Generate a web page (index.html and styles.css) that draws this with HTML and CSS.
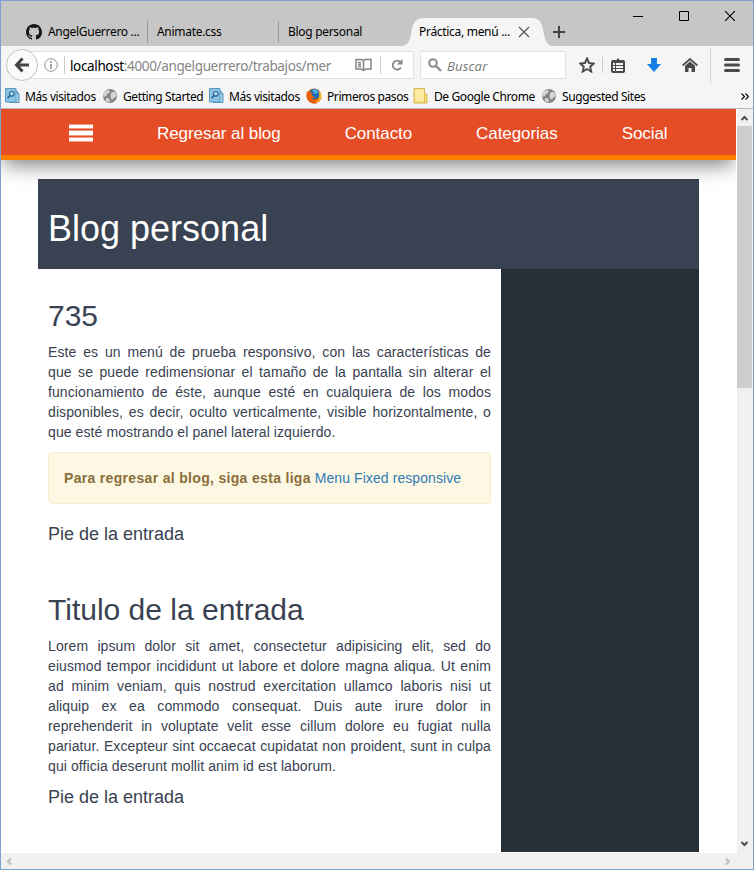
FILE: index.html
```html
<!DOCTYPE html>
<html lang="es">
<head>
<meta charset="utf-8">
<title>Práctica, menú responsivo</title>
<link rel="stylesheet" href="styles.css">
</head>
<body>
<svg class="defs" width="0" height="0" aria-hidden="true">
  <symbol id="most" viewBox="-1 0 16 16">
    <path d="M10 3.500h2.500v2H14v9H4" fill="#a9d3ec" stroke="#4f8fba"/>
    <path d="M.5.500h10.500v13.500H.5z" fill="#8cc3e4" stroke="#5b9cc6"/>
    <circle cx="6.800" cy="5.800" r="2.300" fill="#b9e0f5" stroke="#2b6690" stroke-width="1.200"/>
    <path d="M5.200 7.500 2.500 10.300" stroke="#2b6690" stroke-width="1.600"/>
  </symbol>
  <symbol id="globe" viewBox="0 0 16 16">
    <circle cx="8" cy="8" r="7" fill="#858585"/>
    <path d="M3 3.500 6 2l2 1-1 2-2 1-1 2-2.500 1C1 6.500 1.700 4.700 3 3.500zM9 5l3-1.500 2 2 .5 3-2 1-1.500 2-2-1-.5-2.500zM4 10l3 .5 1 2-1.500 2-2.500-1.500z" fill="#d6d6d6"/>
  </symbol>
</svg>
<div class="window">
  <header class="titlebar">
    <div class="tabs">
      <div class="tab first">
        <svg width="16" height="16" viewBox="0 0 16 16"><path fill="#161616" d="M8 0C3.580 0 0 3.580 0 8c0 3.540 2.290 6.530 5.470 7.590.4.070.55-.17.55-.38 0-.19-.01-.82-.01-1.490-2.010.37-2.530-.49-2.690-.94-.09-.23-.48-.94-.82-1.130-.28-.15-.68-.52-.01-.53.63-.01 1.080.58 1.230.82.72 1.210 1.870.87 2.330.66.070-.52.28-.87.51-1.070-1.780-.2-3.640-.89-3.640-3.950 0-.87.31-1.590.82-2.150-.08-.2-.36-1.020.08-2.120 0 0 .67-.21 2.200.82.64-.18 1.320-.27 2-.27s1.360.09 2 .27c1.530-1.040 2.200-.82 2.200-.82.44 1.100.16 1.920.08 2.120.51.56.82 1.270.82 2.150 0 3.070-1.870 3.750-3.650 3.950.29.25.54.73.54 1.480 0 1.070-.01 1.930-.01 2.200 0 .21.15.46.55.38A8.010 8.010 0 0 0 16 8c0-4.420-3.580-8-8-8z"/></svg>
        <span>AngelGuerrero ...</span>
      </div>
      <div class="tab second"><span>Animate.css</span></div>
      <div class="tab third"><span>Blog personal</span></div>
      <div class="tab active">
        <svg class="tab-shape" width="150" height="28" viewBox="0 0 150 28"><path fill="#f5f5f5" d="M0 28C8 27 8 20 10 11 12 3 15 0 22 0H129C137 0 140 4 141 12 143 22 145 27 150 28z"/></svg>
        <span>Práctica, menú ...</span>
        <svg class="close" width="12" height="12" viewBox="0 0 12 12"><path d="M1 1l10 10M11 1L1 11" stroke="#555" stroke-width="1.200"/></svg>
      </div>
      <svg class="plus" width="12" height="12" viewBox="0 0 12 12"><path d="M6 0v12M0 6h12" stroke="#444" stroke-width="2"/></svg>
    </div>
    <div class="controls">
      <svg width="10" height="10"><path d="M0 5.500h10" stroke="#000"/></svg>
      <svg width="10" height="10"><path d="M.5.500h9v9h-9z" fill="none" stroke="#000"/></svg>
      <svg width="10" height="10"><path d="M0 0l10 10M10 0L0 10" stroke="#000" stroke-width="1.100"/></svg>
    </div>
  </header>

  <div class="toolbar">
    <div class="back"><svg width="16" height="16" viewBox="0 0 16 16"><path d="M8.500 1.500 2.500 8l6 6.500M3 8h12" fill="none" stroke="#444" stroke-width="3"/></svg></div>
    <div class="urlbar">
      <svg width="14" height="14" viewBox="0 0 14 14"><circle cx="7" cy="7" r="6.300" fill="none" stroke="#929292"/><path d="M7 3v2M7 6v5" stroke="#929292" stroke-width="1.600"/></svg>
      <i class="bar"></i>
      <span class="url"><b>localhost</b>:4000/angelguerrero/trabajos/mer</span>
      <svg class="reader" width="17" height="14" viewBox="0 0 17 14"><path d="M1 1.500h5.500l2 1 2-1H16v9.500h-5l-2.500 1.500L6 11H1zM8.500 3v9M3 4.500h3M3 6.500h3M3 8.500h3" fill="none" stroke="#858585" stroke-width="1.500"/></svg>
      <i class="bar short"></i>
      <svg width="12" height="12" viewBox="0 0 12 12"><path d="M9.500 3A4.500 4.500 0 1 0 10 8.500" fill="none" stroke="#858585" stroke-width="1.800"/><path d="M11.500 0v5.500H6z" fill="#858585"/></svg>
    </div>
    <div class="search">
      <svg width="14" height="14" viewBox="0 0 14 14"><circle cx="5" cy="5" r="3.800" fill="none" stroke="#8d8d8d" stroke-width="2"/><path d="M8 8l5 5" stroke="#8d8d8d" stroke-width="2.400"/></svg>
      <em>Buscar</em>
    </div>
    <div class="tools">
      <svg width="16" height="16" viewBox="0 0 16 16"><path d="M8 1.500l2 4.500 4.800.5-3.600 3.200 1 4.800L8 12l-4.200 2.500 1-4.800L1.200 6.500 6 6z" fill="none" stroke="#4a4a4a" stroke-width="1.900"/></svg>
      <i class="bar tool-bar"></i>
      <svg class="clip" width="14" height="15" viewBox="0 0 14 15"><rect x="1" y="3" width="12" height="11" rx="1" fill="#f5f5f5" stroke="#4a4a4a" stroke-width="2"/><path d="M1 2.500h4l2-2.500 2 2.500h4V5H1z" fill="#4a4a4a"/><path d="M4.500 5v8M2 7.500h10M2 10.500h10" stroke="#4a4a4a"/></svg>
      <svg class="down" width="14" height="14" viewBox="0 0 14 14"><path d="M4 0h6v6h4l-7 8-7-8h4z" fill="#177ee5"/></svg>
      <svg class="home" width="16" height="15" viewBox="0 0 16 15"><path d="M.6 7.500 8 1l7.400 6.500" fill="none" stroke="#4a4a4a" stroke-width="1.700"/><path d="M3 7.800l5-4.200 5 4.200V14H9.500v-4h-3v4H3z" fill="#4a4a4a"/></svg>
      <i class="tall"></i>
      <svg class="burger" width="16" height="14" viewBox="0 0 16 14"><path d="M1.500 1.500h13M1.500 7h13M1.500 12.500h13" stroke="#4a4a4a" stroke-width="3" stroke-linecap="round"/></svg>
    </div>
  </div>

  <div class="bookmarks">
    <div class="bm b1"><svg><use href="#most"/></svg><span>Más visitados</span></div>
    <div class="bm b2"><svg><use href="#globe"/></svg><span>Getting Started</span></div>
    <div class="bm b3"><svg><use href="#most"/></svg><span>Más visitados</span></div>
    <div class="bm b4">
      <svg viewBox="0 0 16 16"><circle cx="8" cy="8" r="7.500" fill="#e66000"/><circle cx="8.500" cy="6" r="5.300" fill="#1c6cb5"/><path d="M6 2c3-2 6 0 6.500 2.500L9 6z" fill="#4fb3e8"/><path d="M.7 3C0 8 1 14 7.500 15.500c4 .5 7.500-2.500 8-7-.5 2-2 3.500-3.500 4-3 1-6-.5-6.200-2.500 1 .5 2.500 0 3.200-1-2 0-2-1.500-3.500-2L7 5C5 5 4 4 3.500 3.500 2 4 1.500 5 .7 3z" fill="#e8600c"/><path d="M12.500 2.500c3.500 3.500 3.500 7 1.500 9.500-1.500 2-3.500 2.500-5 2 4-1 5.500-5 3.500-11.500z" fill="#fcc32e"/></svg>
      <span>Primeros pasos</span></div>
    <div class="bm b5"><svg viewBox="0 0 16 16"><path d="M1 .5h10.500v5.500l2.500.5v8.500H1z" fill="#f7df80" stroke="#d6b54a"/><path d="M2 1h9v12H2z" fill="#fbeaa0"/><path d="M11.500 7v8" stroke="#dcb84d"/></svg><span>De Google Chrome</span></div>
    <div class="bm b6"><svg><use href="#globe"/></svg><span>Suggested Sites</span></div>
    <svg width="8" height="7" viewBox="0 0 8 7"><path d="M.5.500l3 3-3 3M4.500.500l3 3-3 3" fill="none" stroke="#000" stroke-width="1.100"/></svg>
  </div>

  <div class="viewport">
    <main class="page">
      <nav class="menu">
        <svg width="24" height="18" viewBox="0 0 24 18"><path d="M0 0h24v5H0zM0 6h24v6H0zM0 13h24v5H0z" fill="#f29a83"/><path d="M0 1h24v3H0zM0 7h24v4H0zM0 14h24v3H0z" fill="#fff"/></svg>
        <a>Regresar al blog</a><a>Contacto</a><a>Categorias</a><a>Social</a>
      </nav>
      <div class="container">
        <div class="banner"><h1>Blog personal</h1></div>
        <div class="columns">
          <div class="posts">
            <article>
              <h2>735</h2>
              <p><span class="full-line">Este es un menú de prueba responsivo, con las características de</span> que se puede redimensionar el tamaño de la pantalla sin alterar el funcionamiento de éste, aunque esté en cualquiera de los modos disponibles, es decir, oculto verticalmente, visible horizontalmente, o que esté mostrando el panel lateral izquierdo.</p>
              <div class="alert"><strong>Para regresar al blog, siga esta liga</strong> <a>Menu Fixed responsive</a></div>
              <h4>Pie de la entrada</h4>
            </article>
            <article>
              <h2>Titulo de la entrada</h2>
              <p>Lorem ipsum dolor sit amet, consectetur adipisicing elit, sed do eiusmod tempor incididunt ut labore et dolore magna aliqua. Ut enim ad minim veniam, quis nostrud exercitation ullamco laboris nisi ut aliquip ex ea commodo consequat. Duis aute irure dolor in reprehenderit in voluptate velit esse cillum dolore eu fugiat nulla pariatur. Excepteur sint occaecat cupidatat non proident, sunt in culpa qui officia deserunt mollit anim id est laborum.</p>
              <h4>Pie de la entrada</h4>
            </article>
          </div>
          <aside></aside>
        </div>
      </div>
    </main>
    <div class="vscroll">
      <svg width="7" height="6" viewBox="0 0 7 6"><path d="M.5 5l3-3 3 3" fill="none" stroke="#505050" stroke-width="2"/></svg>
      <div class="thumb"></div>
      <svg class="bottom" width="7" height="6" viewBox="0 0 7 6"><path d="M.5 1l3 3 3-3" fill="none" stroke="#505050" stroke-width="2"/></svg>
    </div>
  </div>
  <div class="hscroll">
    <svg width="6" height="7" viewBox="0 0 6 7"><path d="M5 .5l-3 3 3 3" fill="none" stroke="#bdbdbd" stroke-width="2"/></svg>
    <svg width="6" height="7" viewBox="0 0 6 7"><path d="M1 .5l3 3-3 3" fill="none" stroke="#bdbdbd" stroke-width="2"/></svg>
  </div>
</div>
</body>
</html>
```
FILE: styles.css
```css
* { box-sizing: border-box; }
body { margin: 0; background: #fff; }
svg { display: block; flex: none; }
.defs { position: absolute; }

.window {
  display: flex;
  flex-direction: column;
  width: 754px;
  height: 870px;
  overflow: hidden;
  border: 1px solid #7aa2ce;
  font: 12px/16px "Noto Sans", "Open Sans", sans-serif;
  color: #000;
}

/* Title bar and tabs */
.titlebar { display: flex; flex: none; justify-content: space-between; height: 45px; background: #c6c6c6; }
.tabs { display: flex; align-items: center; height: 28px; margin-top: 17px; }
.tab { display: flex; align-items: center; height: 22px; white-space: nowrap; }
.tab span { letter-spacing: -0.3px; }
.tab.first { width: 147px; padding-left: 25px; gap: 6px; border-right: 1px solid #999; }
.tab.second { width: 131px; padding-left: 9px; border-right: 1px solid #999; }
.tab.third { width: 123px; padding-left: 9px; }
.tab.active { position: relative; width: 150px; height: 28px; padding-left: 17px; }
.tab-shape { position: absolute; left: 0; top: 0; }
.tab.active span { position: relative; width: 92px; }
.close { position: relative; margin-left: 7px; }
.plus { margin-left: 1px; }
.controls { display: flex; gap: 36px; padding: 10px 18px 0 0; }

/* Toolbar */
.toolbar { display: flex; flex: none; align-items: center; height: 38px; background: #f5f5f5; }
.back {
  display: flex; align-items: center; justify-content: center; flex: none;
  position: relative; z-index: 1; width: 32px; height: 32px; margin-left: 5px;
  border: 1px solid #c2c2c2; border-radius: 50%; background: #fafafa;
}
.urlbar {
  display: flex; align-items: center; flex: none;
  width: 390px; height: 28px; margin-left: -14px; padding-left: 19px;
  border: 1px solid #e2e2e2; background: #fff;
}
.bar { flex: none; width: 1px; height: 18px; margin-left: 6px; background: #ccc; }
.url { flex: none; width: 262px; margin-left: 5px; padding-top: 2px; white-space: nowrap; font-size: 13.5px; letter-spacing: -0.36px; color: #858585; }
.url b { font-weight: 400; color: #000; }
.reader { margin-left: 23px; }
.bar.short { margin: 0 10px 0 8px; }
.search {
  display: flex; align-items: center; flex: none; gap: 5px;
  width: 146px; height: 28px; margin-left: 6px; padding-left: 7px;
  border: 1px solid #e2e2e2; background: #fff; color: #777; font-size: 13px;
}
.search em { padding-top: 2px; font-family: "Open Sans", sans-serif; font-style: italic; letter-spacing: 0.2px; }
.tools { display: flex; align-items: center; height: 38px; margin-left: 13px; }
.tool-bar { height: 16px; margin-left: 7px; background: #c9c9c9; }
.clip { margin-left: 8px; }
.down { margin-left: 22px; }
.home { margin-left: 21px; }
.tall { width: 1px; height: 36px; margin-left: 12px; background: #d5d5d5; }
.burger { margin-left: 13px; }

/* Bookmarks */
.bookmarks { display: flex; flex: none; align-items: center; height: 25px; padding-left: 3px; border-bottom: 1px solid #b8b8b8; background: #f5f5f5; }
.bm { display: flex; align-items: center; flex: none; gap: 5px; white-space: nowrap; letter-spacing: -0.4px; }
.bm svg { width: 16px; height: 16px; }
.bm span { padding-top: 2px; }
.b1 { width: 98px; }
.b2 { width: 106px; }
.b3 { width: 98px; }
.b4 { width: 107px; }
.b5 { width: 128px; }
.b6 { width: 200px; }

/* Web page */
.viewport { display: flex; flex: none; height: 744px; background: #fff; }
.page { width: 735px; height: 743px; overflow: hidden; font: 14px/20px "Liberation Sans", Arial, sans-serif; color: #384252; }
.menu {
  display: flex; align-items: center; gap: 64px; height: 51px; padding: 1px 0 0 68px;
  border-bottom: 5px solid #ff8000; background: #e54d26; color: #fff;
  font-size: 17px; letter-spacing: -0.07px; box-shadow: 0 8px 20px -3px rgba(0, 0, 0, .5);
}
.menu a { padding-top: 3px; }
.container { position: relative; width: 661px; margin: 19px 0 0 37px; }
.banner { height: 90px; padding: 10px; background: #384252; color: #fff; }
h1, h2, h4 { margin: 0; font-weight: 400; line-height: 1.1; }
h1 { margin-top: 20px; font-size: 36px; }
h2 { margin: 20px 0 10px; font-size: 30px; }
h4 { margin: 12px 0 10px; font-size: 18px; }
p { margin: 0 0 10px; text-align: justify; letter-spacing: 0.09px; }
.full-line { display: block; text-align-last: justify; }
.columns { display: flex; height: 583px; }
.posts { width: 463px; }
article { display: flow-root; padding: 10px 10px 8px; }
.alert { margin-bottom: 21px; padding: 15px; border: 1px solid #faebcc; border-radius: 4px; background: #fcf8e3; color: #8a6d3b; }
.alert strong { letter-spacing: 0.32px; }
.alert a { color: #337ab7; letter-spacing: 0.08px; }
aside { width: 198px; background: #272e35; }

/* Scrollbars */
.vscroll { display: flex; flex-direction: column; align-items: center; width: 16px; margin-left: 1px; padding: 6px 1px 0 0; background: #f0f0f0; }
.thumb { width: 15px; height: 262px; margin-top: 5px; background: #cdcdcd; }
.vscroll .bottom { margin: auto 0 6px; }
.hscroll { display: flex; align-items: center; justify-content: space-between; flex: 1; padding: 0 22px 0 5px; background: #f0f0f0; }
```
